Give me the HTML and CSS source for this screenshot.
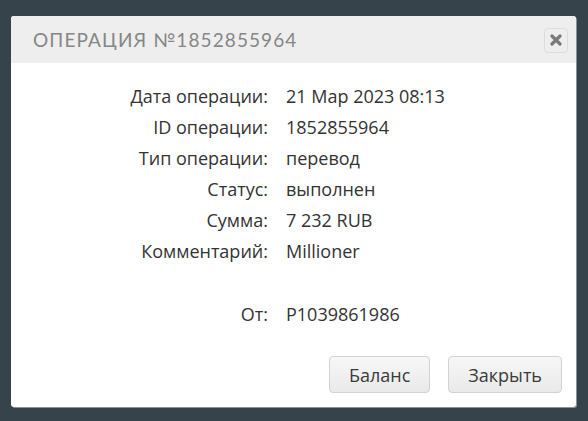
FILE: index.html
```html
<!DOCTYPE html>
<html lang="ru">
<head>
<meta charset="utf-8">
<title>Операция</title>
<link rel="stylesheet" href="styles.css">
</head>
<body>
<div class="modal">
  <div class="modal-header">
    <h3 class="modal-title">Операция №1852855964</h3>
    <button class="close-btn" type="button" aria-label="Закрыть">
      <svg width="12" height="12" viewBox="0 0 12 12"><path d="M2 2 L10 10 M10 2 L2 10" stroke="#7a7a7a" stroke-width="3.2" stroke-linecap="round"/></svg>
    </button>
  </div>
  <div class="modal-body">
    <dl class="details">
      <dt>Дата операции:</dt><dd>21 Мар 2023 08:13</dd>
      <dt>ID операции:</dt><dd>1852855964</dd>
      <dt>Тип операции:</dt><dd>перевод</dd>
      <dt>Статус:</dt><dd>выполнен</dd>
      <dt>Сумма:</dt><dd>7 232 RUB</dd>
      <dt>Комментарий:</dt><dd>Millioner</dd>
      <dt class="spacer"></dt><dd class="spacer"></dd>
      <dt>От:</dt><dd>P1039861986</dd>
    </dl>
  </div>
  <div class="modal-footer">
    <button class="btn" type="button">Баланс</button>
    <button class="btn" type="button">Закрыть</button>
  </div>
</div>
</body>
</html>
```
FILE: styles.css
```css
html, body {
  margin: 0;
  padding: 0;
}
body {
  background: #36434b;
  font-family: "Open Sans", "Liberation Sans", sans-serif;
  height: 421px;
  padding: 16px 0 0 11px;
  box-sizing: border-box;
}
.modal {
  width: 565px;
  height: 391px;
  background: #fff;
  border-radius: 3px;
  box-shadow: 1px 1px 0 rgba(200, 200, 200, 0.6);
  display: flex;
  flex-direction: column;
  overflow: hidden;
}
.modal-header {
  height: 47px;
  background: #eeeeee;
  display: flex;
  align-items: center;
  justify-content: space-between;
  padding: 0 8px 0 22px;
  box-sizing: border-box;
}
.modal-title {
  margin: 0;
  font-family: "Lato", "Open Sans", sans-serif;
  font-weight: 400;
  font-size: 19px;
  letter-spacing: 1.1px;
  text-transform: uppercase;
  color: #868686;
}
.close-btn {
  width: 24px;
  height: 25px;
  margin-top: 1px;
  padding: 0;
  border: 1px solid #dcdcdc;
  border-radius: 4px;
  background: #eeeeee;
  display: flex;
  align-items: center;
  justify-content: center;
}
.modal-body {
  flex: 1;
  padding-top: 18px;
}
.details {
  margin: 0;
  display: grid;
  grid-template-columns: 257px 1fr;
  column-gap: 18px;
  font-size: 18px;
  line-height: 31px;
  color: #333;
}
.details dt {
  text-align: right;
}
.details dd {
  margin: 0;
}
.details .spacer {
  height: 32px;
}
.modal-footer {
  display: flex;
  justify-content: flex-end;
  gap: 18px;
  padding: 0 14px 14px 0;
}
.btn {
  height: 37px;
  padding: 0 19px;
  border: 1px solid #d2d2d2;
  border-radius: 4px;
  background: linear-gradient(#f7f7f7, #e9e9e9);
  font-family: "Open Sans", "Liberation Sans", sans-serif;
  font-size: 18px;
  color: #3a3a3a;
}
```
